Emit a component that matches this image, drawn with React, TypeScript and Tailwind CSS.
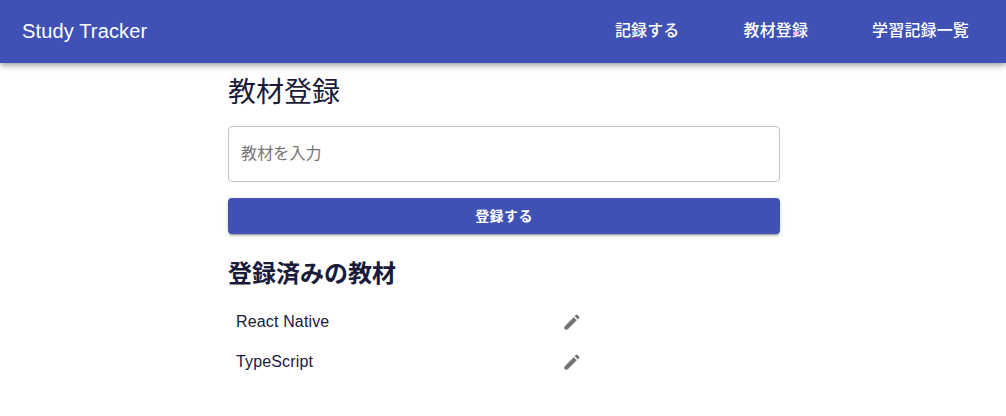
const navItems = ["記録する", "教材登録", "学習記録一覧"];
const materials = ["React Native", "TypeScript"];

const EditIcon = () => (
  <svg viewBox="0 0 24 24" className="w-5 h-5 fill-[#757575]">
    <path d="M3 17.25V21h3.75L17.81 9.94l-3.75-3.75L3 17.25zM20.71 7.04c.39-.39.39-1.02 0-1.41l-2.34-2.34a.9959.9959 0 0 0-1.41 0l-1.83 1.83 3.75 3.75 1.83-1.83z" />
  </svg>
);

export default function App() {
  return (
    <div className="h-[416px] overflow-hidden bg-white text-[#1a1a3a] font-['Liberation_Sans','Noto_Sans_CJK_JP',sans-serif]">
      <header className="relative z-10 h-[63px] bg-[#3f51b5] text-white flex items-center justify-between pl-[22px] pr-[5px] shadow-[0_2px_4px_-1px_rgba(0,0,0,0.2),0_4px_5px_0_rgba(0,0,0,0.14),0_1px_10px_0_rgba(0,0,0,0.12)]">
        <div className="text-xl leading-[32px] tracking-[0.15px] pb-0.5">Study Tracker</div>
        <nav className="flex pb-0.5">
          {navItems.map((item) => (
            <a key={item} className="px-8 text-base font-medium leading-[28px] tracking-[0.15px]">
              {item}
            </a>
          ))}
        </nav>
      </header>

      <main className="w-[552px] ml-[228px]">
        <h1 className="text-[28px] leading-[40px] mt-2.5">教材登録</h1>
        <div className="mt-[13px] h-14 border border-[#c4c4c4] rounded flex items-center px-3 text-base tracking-[0.15px] text-[#757575]">
          教材を入力
        </div>
        <button className="mt-4 w-full h-9 bg-[#3f51b5] text-white text-sm font-bold tracking-[0.4px] rounded shadow-[0_3px_1px_-2px_rgba(0,0,0,0.2),0_2px_2px_0_rgba(0,0,0,0.14),0_1px_5px_0_rgba(0,0,0,0.12)]">
          登録する
        </button>
        <h2 className="mt-[22px] text-[24px] leading-[36px] font-bold">登録済みの教材</h2>
        <ul className="mt-[10px]">
          {materials.map((m) => (
            <li key={m} className="h-10 flex items-center pl-2">
              <span className="w-[326px] text-base tracking-[0.15px]">{m}</span>
              <EditIcon />
            </li>
          ))}
        </ul>
      </main>
    </div>
  );
}
